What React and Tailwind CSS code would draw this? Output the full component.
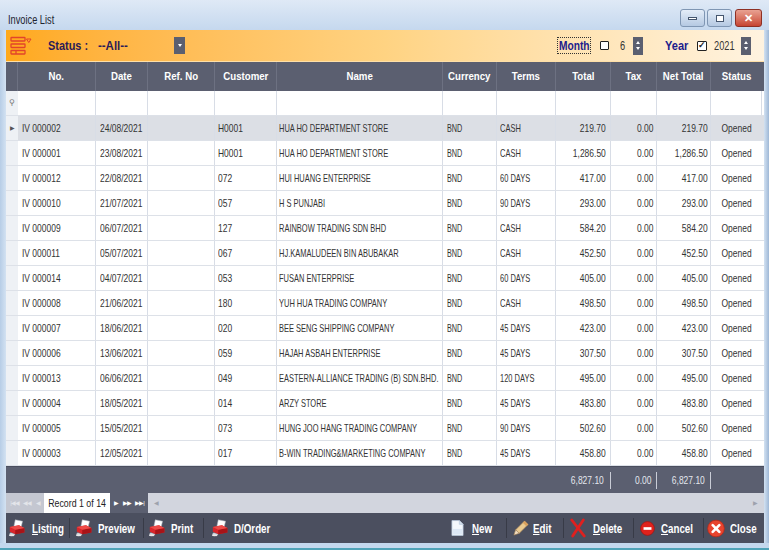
import React from 'react';

const rows = [
  ['IV 000002', '24/08/2021', 'H0001', 'HUA HO DEPARTMENT STORE', 'CASH', '219.70'],
  ['IV 000001', '23/08/2021', 'H0001', 'HUA HO DEPARTMENT STORE', 'CASH', '1,286.50'],
  ['IV 000012', '22/08/2021', '072', 'HUI HUANG ENTERPRISE', '60 DAYS', '417.00'],
  ['IV 000010', '21/07/2021', '057', 'H S PUNJABI', '90 DAYS', '293.00'],
  ['IV 000009', '06/07/2021', '127', 'RAINBOW TRADING SDN BHD', 'CASH', '584.20'],
  ['IV 000011', '05/07/2021', '067', 'HJ.KAMALUDEEN BIN ABUBAKAR', 'CASH', '452.50'],
  ['IV 000014', '04/07/2021', '053', 'FUSAN ENTERPRISE', '60 DAYS', '405.00'],
  ['IV 000008', '21/06/2021', '180', 'YUH HUA TRADING COMPANY', 'CASH', '498.50'],
  ['IV 000007', '18/06/2021', '020', 'BEE SENG SHIPPING COMPANY', '45 DAYS', '423.00'],
  ['IV 000006', '13/06/2021', '059', 'HAJAH ASBAH ENTERPRISE', '45 DAYS', '307.50'],
  ['IV 000013', '06/06/2021', '049', 'EASTERN-ALLIANCE TRADING (B) SDN.BHD.', '120 DAYS', '495.00'],
  ['IV 000004', '18/05/2021', '014', 'ARZY STORE', '45 DAYS', '483.80'],
  ['IV 000005', '15/05/2021', '073', 'HUNG JOO HANG TRADING COMPANY', '90 DAYS', '502.60'],
  ['IV 000003', '12/05/2021', '017', 'B-WIN TRADING&MARKETING COMPANY', '45 DAYS', '458.80'],
];

const cols = 'grid grid-cols-[12px_78px_52px_67px_62px_166px_54px_59px_55px_46px_54px_51px]';
const headers = ['No.', 'Date', 'Ref. No', 'Customer', 'Name', 'Currency', 'Terms', 'Total', 'Tax', 'Net Total', 'Status'];
const line = 'border-r border-[#d8dde6]';

// the screen font is a narrow one, so squeeze the text a bit
const T = ({ children, o = 'origin-left', s = 'scale-x-[0.77]' }) => (
  <span className={`inline-block whitespace-nowrap ${s} ${o}`}>{children}</span>
);

const Printer = () => (
  <svg width="20" height="20" viewBox="0 0 22 20">
    <path d="M8 1 L16 2.5 L14.5 9 L6.5 8 Z" fill="#fff" stroke="#aab0bb" strokeWidth="0.6" />
    <path d="M2 9 L12 7 L18 10 L18 15 L8 17 L2 14 Z" fill="#d9262b" />
    <path d="M8 12 L18 10 L18 15 L8 17 Z" fill="#a81418" />
    <path d="M2 9 L12 7 L18 10 L8 12 Z" fill="#ee4a47" />
    <path d="M3 15 L8 17 L6 19 L1 17 Z" fill="#c9cdd6" />
    <ellipse cx="4" cy="18" rx="3" ry="1.2" fill="#e8e8e8" />
  </svg>
);

const NewIcon = () => (
  <svg width="13" height="18" viewBox="0 0 14 18">
    <path d="M1 1 H9 L13 5 V17 H1 Z" fill="#f4f8fc" stroke="#b8c8dc" strokeWidth="0.8" />
    <path d="M9 1 V5 H13" fill="#d6e2ef" stroke="#b8c8dc" strokeWidth="0.8" />
    <path d="M2 10 H12 V16 H2 Z" fill="#dce8f5" />
  </svg>
);

const EditIcon = () => (
  <svg width="16" height="18" viewBox="0 0 18 18">
    <path d="M13 1 L17 5 L7 15 L3 11 Z" fill="#e9c98f" stroke="#a8865a" strokeWidth="0.7" />
    <path d="M3 11 L7 15 L1 17 Z" fill="#f1dcc0" stroke="#a8865a" strokeWidth="0.7" />
    <path d="M13 1 L17 5 L15 7 L11 3 Z" fill="#d9a05c" />
  </svg>
);

const DeleteIcon = () => (
  <svg width="16" height="20" viewBox="0 0 18 20">
    <path d="M2 1 L16 19" stroke="#e0201f" strokeWidth="3.2" strokeLinecap="round" />
    <path d="M15 1 L3 19" stroke="#e0201f" strokeWidth="3.2" strokeLinecap="round" />
  </svg>
);

const CancelIcon = () => (
  <svg width="15" height="17" viewBox="0 0 17 17">
    <circle cx="8.5" cy="8.5" r="7.8" fill="#e0221c" stroke="#a3120f" strokeWidth="0.8" />
    <rect x="4" y="7" width="9" height="3" fill="#fff" />
  </svg>
);

const CloseIcon = () => (
  <svg width="18" height="19" viewBox="0 0 19 19">
    <circle cx="9.5" cy="9.5" r="8.8" fill="#e8442e" stroke="#b92818" strokeWidth="0.8" />
    <path d="M6 6 L13 13 M13 6 L6 13" stroke="#fff" strokeWidth="2.8" strokeLinecap="round" />
  </svg>
);

const ToolBtn = ({ icon, label, u, pl, gap, tw, pr }) => (
  <div className={`flex items-center ${pl} ${pr} ${gap}`}>
    {icon}
    <div className={tw}>
      <T s="scale-x-[0.78]">
        <span className="text-[12.5px] font-bold text-white">
          {u ? <span className="underline">{label[0]}</span> : label[0]}
          {label.slice(1)}
        </span>
      </T>
    </div>
  </div>
);

const Sep = () => <div className="w-px h-[20px] bg-[#383b47]" />;

const Spin = () => (
  <div className="w-[10px] h-[18px] bg-[#5b5f70] flex flex-col items-center justify-center gap-[3px]">
    <span className="w-0 h-0 border-x-[2.5px] border-x-transparent border-b-[3px] border-b-white" />
    <span className="w-0 h-0 border-x-[2.5px] border-x-transparent border-t-[3px] border-t-white" />
  </div>
);

export default function App() {
  return (
    <div className="w-[769px] h-[550px] flex flex-col bg-[#c4d8ee] font-['Liberation_Sans',Arial,sans-serif] text-[#333] overflow-hidden">
      {/* title bar */}
      <div className="h-[30px] flex items-start justify-between bg-gradient-to-b from-[#dfe9f6] to-[#c5d8ee] pl-[8px] pr-[7px]">
        <span className="mt-[11px] text-[12px] text-[#1e2430]"><T>Invoice List</T></span>
        <div className="flex gap-[2px] mt-[9px]">
          <div className="w-[25px] h-[18px] rounded-[3px] border border-[#7f96b3] bg-gradient-to-b from-[#e4edf8] to-[#b5c9e2] flex items-center justify-center">
            <span className="w-[9px] h-[3px] bg-white border border-[#45566e]" />
          </div>
          <div className="w-[25px] h-[18px] rounded-[3px] border border-[#7f96b3] bg-gradient-to-b from-[#e4edf8] to-[#b5c9e2] flex items-center justify-center">
            <span className="w-[8px] h-[7px] bg-white border-[1.5px] border-[#45566e]" />
          </div>
          <div className="w-[27px] h-[18px] ml-[1px] rounded-[3px] border border-[#8e3024] bg-gradient-to-b from-[#e8a192] to-[#c64432] flex items-center justify-center text-white text-[11px] font-bold">
            ✕
          </div>
        </div>
      </div>

      <div className="flex-1 flex min-h-0">
        <div className="w-[6px] bg-gradient-to-r from-[#b7cde6] to-[#d3e2f2]" />
        <div className="w-[758px] flex flex-col">
          {/* orange filter bar */}
          <div className="h-[32px] flex items-center bg-gradient-to-r from-[#ffa91a] via-[#ffd382] to-[#fff3e0] border-b border-[#ffe0a8]">
            <div className="ml-[4px] flex items-start">
              <svg width="22" height="20" viewBox="0 0 22 20">
                <rect x="1" y="1.5" width="14" height="3.5" rx="0.5" fill="none" stroke="#e2442a" strokeWidth="1.3" />
                <rect x="1" y="8" width="14" height="3.5" rx="0.5" fill="none" stroke="#e2442a" strokeWidth="1.3" />
                <rect x="1" y="14.5" width="14" height="3.5" rx="0.5" fill="none" stroke="#e2442a" strokeWidth="1.3" />
                <line x1="6" y1="14.5" x2="6" y2="18" stroke="#e2442a" strokeWidth="1.3" />
                <path d="M16.5 3 L21 3 L18.75 6.5 Z" fill="none" stroke="#e2442a" strokeWidth="1" />
              </svg>
            </div>
            <div className="ml-[16px] w-[50px] text-[13px] font-bold text-[#2b1b58]"><T s="scale-x-[0.84]">Status :</T></div>
            <div className="w-[76px] text-[13px] font-bold text-[#2b1b58]"><T s="scale-x-[0.88]">--All--</T></div>
            <div className="w-[11px] h-[17px] bg-[#5b5f70] flex items-center justify-center">
              <span className="w-0 h-0 border-x-[2.5px] border-x-transparent border-t-[3px] border-t-white" />
            </div>
            <div className="ml-auto flex items-center mr-[13px]">
              <div className="w-[34px] h-[17px] border border-dotted border-[#333] flex items-center pl-[1px] text-[12px] font-bold text-[#1c1c8c]">
                <T s="scale-x-[0.85]">Month</T>
              </div>
              <span className="ml-[9px] w-[9px] h-[9px] border-[1.5px] border-[#222] bg-white rounded-[1px]" />
              <span className="ml-[11px] w-[12px] text-[12px] text-[#333]"><T>6</T></span>
              <span className="ml-[1px]"><Spin /></span>
              <div className="ml-[22px] w-[32px] text-[13px] font-bold text-[#1c1c8c]"><T s="scale-x-[0.85]">Year</T></div>
              <span className="w-[10px] h-[10px] border-[1.5px] border-[#222] bg-white rounded-[1px] flex items-center justify-center text-[9px] leading-none font-bold text-[#222]">✓</span>
              <div className="ml-[7px] w-[26px] text-[12px] text-[#333]"><T>2021</T></div>
              <span className="ml-[1px]"><Spin /></span>
            </div>
          </div>

          {/* grid */}
          <div className="bg-white flex-1 flex flex-col">
            <div className={`${cols} h-[29px] bg-[#5b5f70]`}>
              <div className="border-r border-[#6d7182]" />
              {headers.map(h => (
                <div key={h} className="flex items-center justify-center text-[11.5px] font-bold text-white border-r border-[#6d7182] last:border-r-0">
                  <T o="origin-center" s="scale-x-[0.84]">{h}</T>
                </div>
              ))}
            </div>
            <div className={`${cols} h-[25px] border-b border-[#dde1e8]`}>
              <div className="bg-[#eef1f5] flex items-center justify-center text-[8px] text-[#777]">⚲</div>
              {headers.map(h => <div key={h} className={line} />)}
            </div>
            {rows.map((r, i) => (
              <div key={r[0]} className={`${cols} h-[25px] border-b border-[#dde1e8] text-[11px] ${i === 0 ? 'bg-[#dcdfe5]' : 'bg-white'}`}>
                <div className="bg-[#eef1f5] flex items-center justify-center text-[#555] text-[6px]">{i === 0 ? '▶' : ''}</div>
                <div className={`flex items-center pl-[4px] ${line}`}><T>{r[0]}</T></div>
                <div className={`flex items-center pl-[4px] ${line}`}><T>{r[1]}</T></div>
                <div className={line} />
                <div className={`flex items-center pl-[3px] ${line}`}><T>{r[2]}</T></div>
                <div className={`flex items-center pl-[2px] ${line}`}><T s="scale-x-[0.68]">{r[3]}</T></div>
                <div className={`flex items-center pl-[4px] ${line}`}><T s="scale-x-[0.66]">BND</T></div>
                <div className={`flex items-center pl-[3px] ${line}`}><T s="scale-x-[0.68]">{r[4]}</T></div>
                <div className={`flex items-center justify-end pr-[4px] ${line}`}><T o="origin-right">{r[5]}</T></div>
                <div className={`flex items-center justify-end pr-[3px] ${line}`}><T o="origin-right">0.00</T></div>
                <div className={`flex items-center justify-end pr-[2px] ${line}`}><T o="origin-right">{r[5]}</T></div>
                <div className="flex items-center justify-center"><T o="origin-center">Opened</T></div>
              </div>
            ))}
          </div>

          {/* summary footer */}
          <div className={`${cols} h-[27px] bg-[#5b5f70] text-[11px] text-[#e4e7ee] border-t border-[#4a4e5e]`}>
            <div className="col-span-8" />
            <div className="flex items-center justify-end pr-[6px] my-[5px] border-r border-[#c9ccd6]"><T o="origin-right">6,827.10</T></div>
            <div className="flex items-center justify-end pr-[5px] my-[5px] border-r border-[#c9ccd6]"><T o="origin-right">0.00</T></div>
            <div className="flex items-center justify-end pr-[5px] my-[5px] border-r border-[#c9ccd6]"><T o="origin-right">6,827.10</T></div>
          </div>

          {/* record navigator */}
          <div className="h-[20px] flex bg-[#d2d5de] text-[11px]">
            <div className="w-[38px] bg-[#c4c7d1] flex items-center justify-around px-[2px] text-[#e3e5ea] text-[6px] tracking-[-1px]">
              <span>|◀◀</span><span>◀◀</span><span>◀</span>
            </div>
            <div className="w-[66px] bg-white flex items-center justify-center text-[#222]">
              <T o="origin-center" s="scale-x-[0.8]">Record 1 of 14</T>
            </div>
            <div className="w-[38px] bg-[#5b5f70] flex items-center justify-around px-[2px] text-white text-[6px] tracking-[-1px]">
              <span>▶</span><span>▶▶</span><span>▶▶|</span>
            </div>
            <div className="flex-1 flex items-center justify-between px-[6px] text-[#9ea2ad] text-[6px]">
              <span>◀</span><span>▶</span>
            </div>
          </div>

          {/* bottom toolbar */}
          <div className="h-[30px] flex items-center justify-between bg-[#4b4f5f]">
            <div className="flex items-center">
              <ToolBtn icon={<Printer />} label="Listing" u pl="pl-[2px]" gap="gap-[4px]" tw="w-[28px]" pr="pr-[9px]" />
              <Sep />
              <ToolBtn icon={<Printer />} label="Preview" pl="pl-[5px]" gap="gap-[3px]" tw="w-[35px]" pr="pr-[10px]" />
              <Sep />
              <ToolBtn icon={<Printer />} label="Print" pl="pl-[4px]" gap="gap-[3px]" tw="w-[21px]" pr="pr-[11px]" />
              <Sep />
              <ToolBtn icon={<Printer />} label="D/Order" pl="pl-[7px]" gap="gap-[3px]" tw="w-[35px]" pr="pr-[0px]" />
            </div>
            <div className="flex items-center">
              <ToolBtn icon={<NewIcon />} label="New" u pl="pl-[0px]" gap="gap-[8px]" tw="w-[18px]" pr="pr-[16px]" />
              <Sep />
              <ToolBtn icon={<EditIcon />} label="Edit" u pl="pl-[6px]" gap="gap-[4px]" tw="w-[18px]" pr="pr-[12px]" />
              <Sep />
              <ToolBtn icon={<DeleteIcon />} label="Delete" u pl="pl-[6px]" gap="gap-[7px]" tw="w-[28px]" pr="pr-[12px]" />
              <Sep />
              <ToolBtn icon={<CancelIcon />} label="Cancel" u pl="pl-[6px]" gap="gap-[6px]" tw="w-[29px]" pr="pr-[13px]" />
              <Sep />
              <ToolBtn icon={<CloseIcon />} label="Close" pl="pl-[3px]" gap="gap-[5px]" tw="w-[23px]" pr="pr-[11px]" />
            </div>
          </div>
        </div>
        <div className="flex-1 bg-gradient-to-r from-[#d3e2f2] to-[#9fb8d6]" />
      </div>
      <div className="h-[7px] bg-[#c4d8ee] border-b-2 border-[#4fa3b8]" />
    </div>
  );
}
